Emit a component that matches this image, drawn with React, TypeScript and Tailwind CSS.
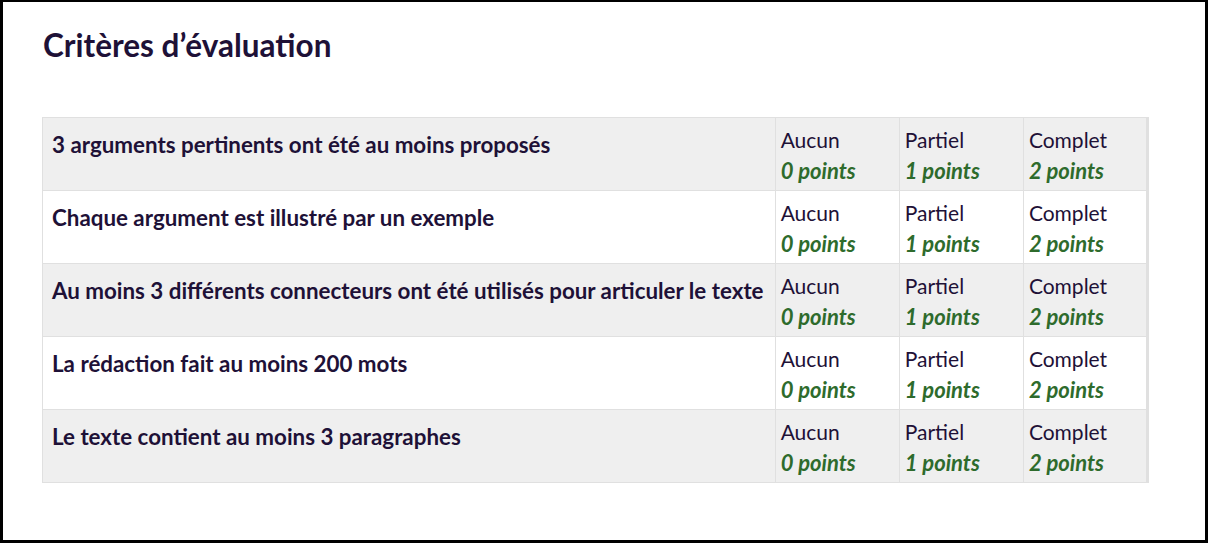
const rows = [
  "3 arguments pertinents ont été au moins proposés",
  "Chaque argument est illustré par un exemple",
  "Au moins 3 différents connecteurs ont été utilisés pour articuler le texte",
  "La rédaction fait au moins 200 mots",
  "Le texte contient au moins 3 paragraphes",
];

const levels = [
  { label: "Aucun", points: "0 points" },
  { label: "Partiel", points: "1 points" },
  { label: "Complet", points: "2 points" },
];

export default function App() {
  return (
    <div className="h-[543px] w-[1208px] bg-black" style={{ fontFamily: "Lato, 'Open Sans', sans-serif" }}>
      <div className="h-[540px] w-[1205px] border-l-[3px] border-t-[2px] border-black bg-white pl-[39px] pt-[25px] text-[#1e1137] rounded-tl-[3px]">
        <h2 className="pl-[1px] text-[31.5px] font-bold leading-[36px]">Critères d’évaluation</h2>
        <table className="mt-[54px] w-[1107px] border-collapse border border-r-[3px] border-[#e0e0e0]">
          <tbody>
            {rows.map((r, i) => (
              <tr key={r} className={i % 2 === 0 ? "bg-[#efefef]" : "bg-white"}>
                <td className="h-[73px] w-[732px] border border-[#e0e0e0] pl-[9px] pt-[12px] align-top text-[22.35px] font-bold leading-[30px]">
                  {r}
                </td>
                {levels.map((l) => (
                  <td key={l.label} className="w-[124px] border border-[#e0e0e0] pl-[5px] pt-[6px] align-top text-[21px] leading-[31px]">
                    <div>{l.label}</div>
                    <div className="text-[22px] font-bold italic text-[#2e6b2c]">{l.points}</div>
                  </td>
                ))}
              </tr>
            ))}
          </tbody>
        </table>
      </div>
    </div>
  );
}
